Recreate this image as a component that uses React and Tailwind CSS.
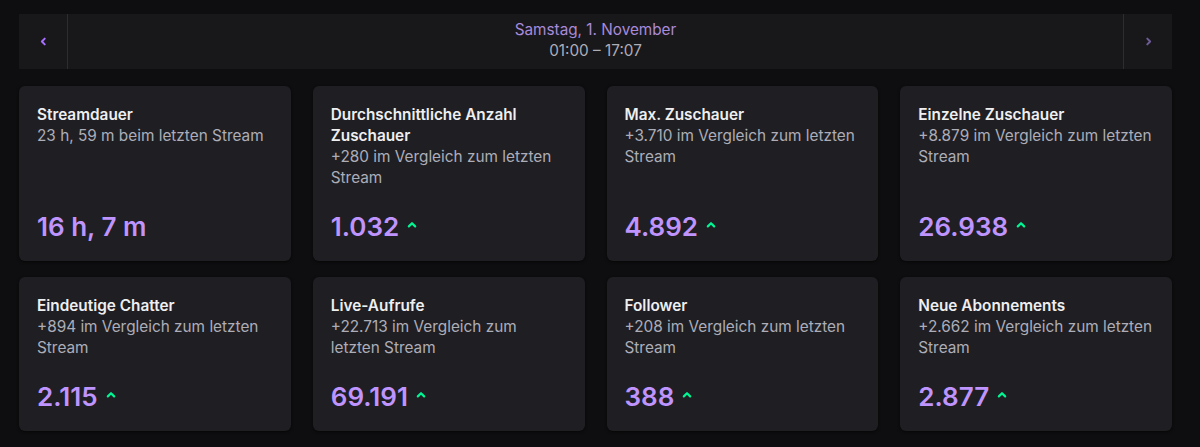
import React from "react";

const stats = [
    { title: "Streamdauer", sub: "23 h, 59 m beim letzten Stream", value: "16 h, 7 m", up: false },
    { title: "Durchschnittliche Anzahl Zuschauer", sub: "+280 im Vergleich zum letzten Stream", value: "1.032", up: true },
    { title: "Max. Zuschauer", sub: "+3.710 im Vergleich zum letzten Stream", value: "4.892", up: true },
    { title: "Einzelne Zuschauer", sub: "+8.879 im Vergleich zum letzten Stream", value: "26.938", up: true },
    { title: "Eindeutige Chatter", sub: "+894 im Vergleich zum letzten Stream", value: "2.115", up: true },
    { title: "Live-Aufrufe", sub: "+22.713 im Vergleich zum letzten Stream", value: "69.191", up: true },
    { title: "Follower", sub: "+208 im Vergleich zum letzten Stream", value: "388", up: true },
    { title: "Neue Abonnements", sub: "+2.662 im Vergleich zum letzten Stream", value: "2.877", up: true },
];

function Chevron({ dir, className }) {
    const d = dir === "left" ? "M7 2 L3.5 5.5 L7 9" : dir === "right" ? "M4 2 L7.5 5.5 L4 9" : "M2 7 L5.5 3.5 L9 7";
    return (
        <svg width="11" height="11" viewBox="0 0 11 11" className={className}>
            <path d={d} fill="none" stroke="currentColor" strokeWidth="2.4" strokeLinecap="round" strokeLinejoin="round" />
        </svg>
    );
}

function StatCard({ title, sub, value, up }) {
    return (
        <div className="bg-[#1f1f23] rounded-md shadow-[0_1px_3px_rgba(0,0,0,0.6)] pt-[18px] pb-[18px] px-[18px] flex flex-col">
            <div className="text-[15.35px] leading-[21px] font-semibold text-[#efeff1]">{title}</div>
            <div className="text-[15.35px] leading-[21px] text-[#adadb8]">{sub}</div>
            <div className="mt-auto pt-[23px] flex items-center gap-[8px]">
                <span className="text-[26px] leading-[32px] font-semibold text-[#bf94ff]">{value}</span>
                {up && <Chevron dir="up" className="text-[#00f593] mt-[-4px] w-[10px] h-[10px]" />}
            </div>
        </div>
    );
}

export default function App() {
    return (
        <div className="min-h-screen bg-[#0e0e10] px-[19px] pt-[14px] pb-[14px]" style={{ fontFamily: "Inter, 'Noto Sans', sans-serif" }}>
            <div className="w-[1153px]">
                <div className="flex h-[55px] bg-[#18181b]">
                    <button className="w-[49px] flex items-center justify-center border-r border-[#2c2c31] text-[#a970ff]">
                        <Chevron dir="left" className="w-[9px] h-[9px]" />
                    </button>
                    <div className="flex-1 flex flex-col items-center justify-center pb-[2px]">
                        <div className="text-[15.3px] leading-[20px] text-[#a98ad8]">Samstag, 1. November</div>
                        <div className="text-[15.3px] leading-[21px] text-[#adadb8]">01:00 – 17:07</div>
                    </div>
                    <button className="w-[49px] flex items-center justify-center border-l border-[#2c2c31] text-[#6f5c96]">
                        <Chevron dir="right" className="w-[9px] h-[9px]" />
                    </button>
                </div>
                <div className="grid grid-cols-4 gap-x-[22px] gap-y-[16px] mt-[17px]">
                    {stats.map((s) => (
                        <StatCard key={s.title} {...s} />
                    ))}
                </div>
            </div>
        </div>
    );
}
